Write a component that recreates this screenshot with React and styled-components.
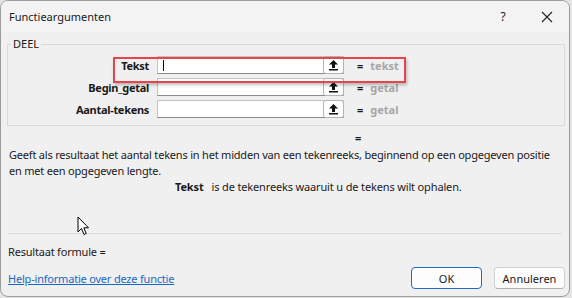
import React from 'react'
import styled, { createGlobalStyle } from 'styled-components'

const GlobalStyle = createGlobalStyle`
  html, body {
    margin: 0;
    padding: 0;
    background: #e4e4e4;
  }
  body {
    font-family: "Segoe UI", "Noto Sans", "Liberation Sans", sans-serif;
    font-size: 11px;
    color: #1a1a1a;
  }
`;

const Dialog = styled.div`
  position: relative;
  box-sizing: border-box;
  width: 570px;
  height: 297px;
  background: #f0f0f0;
  border: 1px solid #9c9c9c;
  border-radius: 8px;
  overflow: hidden;
  display: flex;
  flex-direction: column;
`;

const TitleBar = styled.div`
  height: 31px;
  display: flex;
  align-items: center;
  padding-left: 8px;
  background: #f3f3f3;
`;

const Title = styled.div`
  flex: 1;
  font-size: 11px;
  color: #1a1a1a;
`;

const TitleButton = styled.div`
  width: 44px;
  height: 31px;
  display: flex;
  align-items: center;
  justify-content: center;
  font-size: 12px;
  color: #222;
`;

const Body = styled.div`
  flex: 1;
  display: flex;
  flex-direction: column;
  padding: 0 4px 0 6px;
`;

const Group = styled.fieldset`
  position: relative;
  margin: 5px 0 0 0;
  padding: 6px 0 0 0;
  border: 1px solid #dadada;
  box-sizing: border-box;
  height: 89px;
`;

const Legend = styled.legend`
  padding: 0 2px;
  margin-left: 3px;
  line-height: 14px;
  font-size: 11px;
  color: #1a1a1a;
`;

const ArgGrid = styled.div`
  display: grid;
  grid-template-columns: 141px 187px auto;
  column-gap: 8px;
  row-gap: 4px;
  align-items: center;
  margin-top: -1px;
`;

const ArgLabel = styled.div`
  text-align: right;
  font-weight: bold;
  letter-spacing: -0.3px;
  color: #1a1a1a;
`;

const ArgInput = styled.div`
  position: relative;
  box-sizing: border-box;
  height: 18px;
  background: #fff;
  border: 1px solid #c4c4c4;
  border-bottom-color: #8a8a8a;
  display: flex;
  align-items: center;
  justify-content: flex-end;
`;

const Caret = styled.div`
  position: absolute;
  left: 5px;
  top: 3px;
  width: 1px;
  height: 11px;
  background: #000;
`;

const RefButton = styled.div`
  box-sizing: border-box;
  width: 21px;
  height: 18px;
  margin-right: -1px;
  border: 1px solid #b4b4b4;
  border-radius: 3px;
  background: #fff;
  display: flex;
  align-items: center;
  justify-content: center;
`;

const ArgValue = styled.div`
  display: flex;
  gap: 7px;
  padding-left: 5px;
  font-weight: bold;
  color: #a6a6a6;
`;

const Eq = styled.span`
  color: #1a1a1a;
  font-weight: bold;
`;

const Highlight = styled.div`
  position: absolute;
  left: 105px;
  top: 6px;
  width: 293px;
  height: 26px;
  box-sizing: border-box;
  border: 2px solid #e8444c;
  box-shadow: 1px 2px 3px rgba(0, 0, 0, 0.25);
  pointer-events: none;
`;

const ResultEq = styled.div`
  margin: 4px 0 0 348px;
  font-weight: bold;
  line-height: 16px;
`;

const Description = styled.p`
  margin: 1px 0 0 2px;
  line-height: 16px;
  letter-spacing: -0.2px;
`;

const ArgHelp = styled.div`
  display: flex;
  gap: 8px;
  margin: 0 0 0 168px;
  line-height: 16px;
  letter-spacing: -0.15px;
`;

const Separator = styled.div`
  margin: 38px 3px 0 1px;
  height: 1px;
  background: #dcdcdc;
`;

const Formula = styled.div`
  margin: 10px 0 0 1px;
  line-height: 16px;
  letter-spacing: -0.2px;
`;

const Footer = styled.div`
  display: flex;
  align-items: center;
  margin-top: 7px;
  padding-left: 1px;
`;

const HelpLink = styled.a`
  flex: 1;
  color: #1668c4;
  text-decoration: underline;
  letter-spacing: -0.2px;
  cursor: pointer;
`;

const Button = styled.button`
  box-sizing: border-box;
  width: 71px;
  height: 22px;
  margin-left: ${p => p.$gap || 0}px;
  background: #fdfdfd;
  border: 1px solid ${p => (p.$primary ? '#1a6ac8' : '#d0d0d0')};
  border-bottom-color: ${p => (p.$primary ? '#1a6ac8' : '#b0b0b0')};
  border-radius: 4px;
  font-family: inherit;
  font-size: 11px;
  color: #1a1a1a;
  padding: 0;
`;

const Pointer = styled.svg`
  position: absolute;
  left: 76px;
  top: 215px;
`;

const UpArrow = () => (
  <svg width="11" height="12" viewBox="0 0 11 12">
    <path d="M5.5 1 L10 5.5 L7 5.5 L7 9 L4 9 L4 5.5 L1 5.5 Z" fill="#111" />
    <rect x="1" y="10" width="9" height="1.5" fill="#111" />
  </svg>
);

const args = [
  { label: 'Tekst', value: 'tekst', focused: true },
  { label: 'Begin_getal', value: 'getal' },
  { label: 'Aantal-tekens', value: 'getal' },
];

export default function App() {
  return (
    <>
      <GlobalStyle />
      <Dialog>
        <TitleBar>
          <Title>Functieargumenten</Title>
          <TitleButton>?</TitleButton>
          <TitleButton>
            <svg width="12" height="12" viewBox="0 0 12 12">
              <path d="M1 1 L11 11 M11 1 L1 11" stroke="#222" strokeWidth="1.1" />
            </svg>
          </TitleButton>
        </TitleBar>
        <Body>
          <Group>
            <Legend>DEEL</Legend>
            <ArgGrid>
              {args.map((a, i) => (
                <React.Fragment key={i}>
                  <ArgLabel>{a.label}</ArgLabel>
                  <ArgInput>
                    {a.focused && <Caret />}
                    <RefButton><UpArrow /></RefButton>
                  </ArgInput>
                  <ArgValue><Eq>=</Eq>{a.value}</ArgValue>
                </React.Fragment>
              ))}
            </ArgGrid>
            <Highlight />
          </Group>
          <ResultEq>=</ResultEq>
          <Description>
            Geeft als resultaat het aantal tekens in het midden van een tekenreeks, beginnend op een opgegeven positie en met een opgegeven lengte.
          </Description>
          <ArgHelp>
            <b>Tekst</b>
            <span>is de tekenreeks waaruit u de tekens wilt ophalen.</span>
          </ArgHelp>
          <Separator />
          <Formula>Resultaat formule =</Formula>
          <Footer>
            <HelpLink>Help-informatie over deze functie</HelpLink>
            <Button $primary>OK</Button>
            <Button $gap={12}>Annuleren</Button>
          </Footer>
        </Body>
        <Pointer width="13" height="20" viewBox="0 0 13 20">
          <path d="M1 1 L1 16 L4.5 12.5 L7 18.5 L9.2 17.5 L6.8 11.8 L11.5 11.8 Z" fill="#fff" stroke="#000" strokeWidth="1" strokeLinejoin="round" />
        </Pointer>
      </Dialog>
    </>
  );
}
